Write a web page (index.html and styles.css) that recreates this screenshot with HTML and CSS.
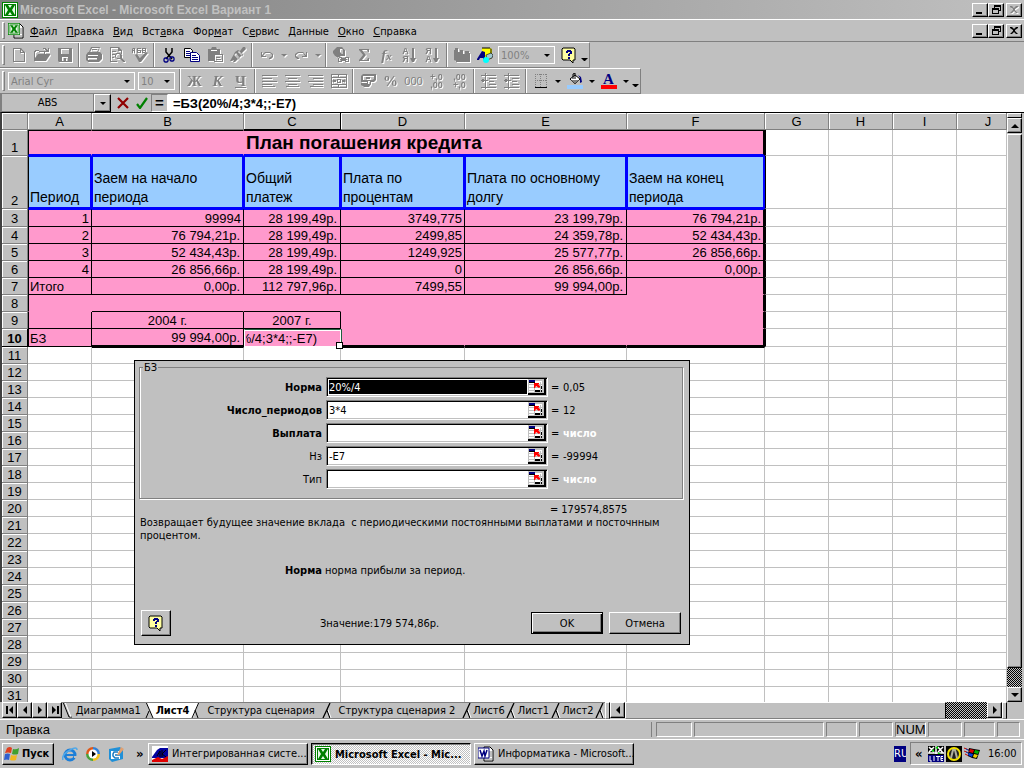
FILE: index.html
```html
<!DOCTYPE html>
<html lang="ru">
<head>
  <meta charset="UTF-8">
  <title>Microsoft Excel - Microsoft Excel Вариант 1</title>
  <link rel="stylesheet" href="styles.css">
</head>
<body>

  <!-- shared icons -->
  <svg class="defs" aria-hidden="true">
    <symbol id="xl" viewBox="0 0 16 16">
      <path d="M0 0h16v16H0z" fill="#008000"/><path d="M1 1h14v14H1z" fill="#fff"/><path d="M2 2h12v12H2z" fill="#008000"/><path d="M3 3h10v10H3z" fill="#e8f8e8"/>
      <path d="M3 3h3l2 3 2-3h3l-3 5 3 5h-3l-2-3-2 3H3l3-5z" fill="#008000"/>
    </symbol>
    <symbol id="help" viewBox="0 0 16 16">
      <path d="M2 1h11l1 1v11h-2v3l-3-3H2l-1-1V2z" fill="#ffffa0" stroke="#000"/>
      <path d="M5 6V4h1V3h4v1h1v3H9v2H7V7h1V6h1V5H7v1zM7 10h2v2H7z" fill="#000080"/>
    </symbol>
    <symbol id="ref" viewBox="0 0 16 14">
      <path d="M0 0h16v14H0z" fill="#c0c0c0"/><path d="M1 2h13v11H1z" fill="#fff"/>
      <path d="M1 5.500h13M1 8.500h13M1 11.500h13M6.500 3v10M12.500 3v10" stroke="#c0c0c0"/>
      <path d="M1 1h6v2H1z" fill="#000080"/><path d="M1 3h6v1H1zM7 11h5v2H7zM13 11h1v2h-1zM13 7h1v3h-1z" fill="#000"/>
      <path d="M6 4h5v1h-1l2 2v1l-1 1-3-2-1 2H6z" fill="#f00"/>
    </symbol>
    <symbol id="min" viewBox="0 0 12 10"><path d="M2 7h6v2H2z"/></symbol>
    <symbol id="restore" viewBox="0 0 12 10"><path d="M4 0h7v6H9V5h1V2H5v1H4zM2 3h7v6H2zm1 2v3h5V5z" fill-rule="evenodd"/></symbol>
    <symbol id="close" viewBox="0 0 12 10"><path d="M2 1h2l2 2 2-2h2v1L7 4v1l3 3H8L6 6 4 8H2l3-3V4L2 2z"/></symbol>
    <symbol id="al" viewBox="0 0 16 16"><path d="M0 2h15v1H0zM0 5h10v1H0zM0 8h15v1H0zM0 11h10v1H0zM0 14h13v-1H0z"/></symbol>
    <symbol id="ac" viewBox="0 0 16 16"><path d="M0 2h15v1H0zM3 5h9v1H3zM0 8h15v1H0zM3 11h9v1H3zM1 14h13v-1H1z"/></symbol>
    <symbol id="ar" viewBox="0 0 16 16"><path d="M0 2h15v1H0zM5 5h10v1H5zM0 8h15v1H0zM5 11h10v1H5zM2 14h13v-1H2z"/></symbol>
    <symbol id="indent" viewBox="0 0 16 16"><path d="M0 2h15v1H0zM8 5h7v1H8zM8 8h5v1H8zM8 11h7v1H8zM0 14h15v1H0zM4 0h1v16H4zM0 7h7v1H0zM1 6h2v3H1z"/></symbol>
    <symbol id="sortdown" viewBox="0 0 16 16"><path d="M11 1h2v10h2l-2 4h-2l-2-4h2z"/></symbol>
  </svg>

  <header class="titlebar">
    <svg class="i16"><use href="#xl"/></svg>
    <h1>Microsoft Excel - Microsoft Excel Вариант 1</h1>
    <div class="winbtns">
      <button aria-label="Свернуть"><svg><use href="#min"/></svg></button>
      <button aria-label="Восстановить"><svg><use href="#restore"/></svg></button>
      <button class="closebtn" aria-label="Закрыть" disabled><svg><use href="#close"/></svg></button>
    </div>
  </header>

  <nav class="menubar">
    <i class="handle"></i>
    <svg class="i16 docicon" viewBox="0 0 16 16"><path d="M6 1h6l3 3v11H6z" fill="#fff" stroke="#000"/><path d="M11 6h3M11 8h3M11 10h3M7 13h7" stroke="#808080"/><use href="#xl" width="12" height="12"/></svg>
    <a href="#"><u>Ф</u>айл</a>
    <a href="#"><u>П</u>равка</a>
    <a href="#"><u>В</u>ид</a>
    <a href="#">Вст<u>а</u>вка</a>
    <a href="#">Фор<u>м</u>ат</a>
    <a href="#">С<u>е</u>рвис</a>
    <a href="#"><u>Д</u>анные</a>
    <a href="#"><u>О</u>кно</a>
    <a href="#"><u>С</u>правка</a>
    <div class="winbtns">
      <button aria-label="Свернуть"><svg><use href="#min"/></svg></button>
      <button aria-label="Восстановить"><svg><use href="#restore"/></svg></button>
      <button class="closebtn" aria-label="Закрыть"><svg><use href="#close"/></svg></button>
    </div>
  </nav>

  <div class="toolbar">
    <i class="handle"></i>
    <button class="tb off" aria-label="Создать"><svg viewBox="0 0 16 16"><path d="M2 1h8l4 4v10H2zm1 1v12h10V6H9V2zm7 1v2h2z" fill-rule="evenodd"/></svg></button>
    <button class="tb off" aria-label="Открыть"><svg viewBox="0 0 16 16"><path d="M0 4h1V3h4v1h6v3h5v1l-4 6H0zm1 1v6l3-4h6V5H5V4H2v1zM9 1h3v1h1v1h1V1h1v4h-4V4h1V3h-1V2H9z" fill-rule="evenodd"/></svg></button>
    <button class="tb off" aria-label="Сохранить"><svg viewBox="0 0 16 16"><path d="M1 1h14v14H2l-1-1zm3 1v5h8V2zm1 8v4h2v-3h2v3h2v-4z" fill-rule="evenodd"/></svg></button>
    <i class="sep"></i>
    <button class="tb off" aria-label="Печать"><svg viewBox="0 0 16 16"><path d="M5 0h9l-2 5h2l2 2v5l-3 3H2l-2-2V8l2-3h1zm1 1L4 5h7l2-4zM2 8v1h10V8zm0 3v2h9v-2zM6 2h5v1H6z" fill-rule="evenodd"/></svg></button>
    <button class="tb off" aria-label="Просмотр"><svg viewBox="0 0 16 16"><path d="M1 0h9l3 3v4h-1V4H9V1H2v13h6v1H1zM3 4h4v1H3zM3 7h3v1H3zM3 10h2v1H3zM7 6h4l2 2v3l3 3v1h-2l-3-3H8l-2-2V8zm1 1L7 8v2l1 1h3V8l-1-1z" fill-rule="evenodd"/></svg></button>
    <button class="tb off" aria-label="Орфография"><svg viewBox="0 0 16 16"><path d="M0 6V2l1-1h2v5H2V4H1v2zM1 3h1V2H1zM5 1h4v1H6v1h3v3H5zm1 3v1h2V4zM10 1h4v5h-4zm1 1v1h2V2zm0 2v1h2V4zM3 8l2-1 3 4 6-6 2 1-7 9H7z" fill-rule="evenodd"/></svg></button>
    <i class="sep"></i>
    <button class="tb" aria-label="Вырезать"><svg viewBox="0 0 16 16"><path d="M5 1v4l6 7M11 1v4l-6 7" fill="none" stroke="#000" stroke-width="1.5"/><path d="M4 11h2l1 1v2l-1 1H4l-1-1v-2zM10 10h2l1 1v2l-1 1h-2l-1-1v-2z" fill="none" stroke="#000080" stroke-width="1.3"/></svg></button>
    <button class="tb" aria-label="Копировать"><svg viewBox="0 0 16 16"><path d="M.5 1.500h6l2 2v7h-8z" fill="#fff" stroke="#000"/><path d="M6.500 5.500h6l3 3v6h-9z" fill="#fff" stroke="#000080"/><path d="M2 4.500h4M2 6.500h4M2 8.500h4M8 8.500h4M8 10.500h6M8 12.500h6" stroke="#000080"/></svg></button>
    <button class="tb off" aria-label="Вставить"><svg viewBox="0 0 16 16"><path d="M1 2h3l1-2h4l1 2h3v5h3v8H7v-1H1zM8 8v6h7V8zM4 3v1h6V3zM9 10h4v1H9zM9 12h5v1H9z" fill-rule="evenodd"/></svg></button>
    <button class="tb off" aria-label="Формат по образцу"><svg viewBox="0 0 16 16"><path d="M13 0h2l1 2-4 4 1 2-3 2-5 5H3l1-2-2 1H0l4-7 1-2 3-2 2 1zM6 6L4 8l4 4 1-2zM8 5l4 4V7L9 4z" fill-rule="evenodd"/></svg></button>
    <i class="sep"></i>
    <button class="tb off" aria-label="Отменить"><svg viewBox="0 0 16 16"><path d="M2 5h1v3l3-3h5l3 2v3l-2 2h-2v-1l3-2V8l-2-2H6L4 9h3v1H2z"/></svg></button>
    <button class="arr off" aria-label="Список отмены"></button>
    <button class="tb off" aria-label="Вернуть"><svg viewBox="0 0 16 16"><path d="M14 5h-1v3l-3-3H5L2 7v3l2 2h2v-1L3 9V8l2-2h5l2 3H9v1h5z"/></svg></button>
    <button class="arr off" aria-label="Список возврата"></button>
    <i class="sep"></i>
    <button class="tb off" aria-label="Гиперссылка"><svg viewBox="0 0 16 16"><path d="M4 0h5l3 3v6H8L5 11 2 9 0 6V4zm3 2v3l2 2h1V3L9 2zM5 10h4v1h3v-1h4v5h-4v-1H9v1H5zm1 1v3h2v-1H7v-1h1v-1zm7 0v1h1v1h-1v1h2v-3z" fill-rule="evenodd"/></svg></button>
    <button class="tb off" aria-label="Автосумма"><svg viewBox="0 0 16 16"><path d="M3 2h10v3h-1l-1-2H6l4 5-4 5h5l1-2h1v3H3v-1l4-5-4-5z"/></svg></button>
    <button class="tb off fx" aria-label="Функция"><i>f<small>x</small></i></button>
    <button class="tb off sort" aria-label="По возрастанию"><span>А<br>Я</span><svg viewBox="8 0 8 16"><use href="#sortdown" width="16" height="16"/></svg></button>
    <button class="tb off sort" aria-label="По убыванию"><span>Я<br>А</span><svg viewBox="8 0 8 16"><use href="#sortdown" width="16" height="16"/></svg></button>
    <i class="sep"></i>
    <button class="tb off" aria-label="Диаграмма"><svg viewBox="0 0 16 16"><path d="M0 3h1V1h3v4h2V3h3v4h2V4h4v10H2l-2-1z"/><path d="M2 15h14v-9h-1v8H2z"/></svg></button>
    <button class="tb" aria-label="Рисование"><svg viewBox="0 0 16 16"><path d="M5 1h8l2 2v8H8L5 7z" fill="#ff0"/><path d="M13 1l2 1v9l-2 1z" fill="#808000"/><path d="M5 1h8" stroke="#000"/><path d="M0 12L5 4l3 1v8H6v-2H3l-1 2H0z" fill="#000080"/><path d="M9 8l5-2 2 2-1 3-5 2z" fill="#a0c8d0" stroke="#000" stroke-width=".6"/><circle cx="9" cy="13" r="3" fill="#0ff"/></svg></button>
    <span class="combo zoombox"><select aria-label="Масштаб"><option>100%</option></select></span>
    <button class="tb" aria-label="Справка"><svg><use href="#help"/></svg></button>
    <button class="arr more" aria-label="Другие кнопки"></button>
  </div>

  <div class="toolbar">
    <i class="handle"></i>
    <span class="combo fontbox"><select aria-label="Шрифт"><option>Arial Cyr</option></select></span>
    <span class="combo sizebox"><select aria-label="Размер"><option>10</option></select></span>
    <i class="sep"></i>
    <button class="tb off letter"><b>Ж</b></button>
    <button class="tb off letter"><b><i>К</i></b></button>
    <button class="tb off letter"><b><u>Ч</u></b></button>
    <i class="sep"></i>
    <button class="tb off" aria-label="По левому краю"><svg><use href="#al"/></svg></button>
    <button class="tb off" aria-label="По центру"><svg><use href="#ac"/></svg></button>
    <button class="tb off" aria-label="По правому краю"><svg><use href="#ar"/></svg></button>
    <button class="tb off" aria-label="Объединить"><svg viewBox="0 0 16 16"><path d="M0 1h16v14H0zm1 1v2h6V2zm7 0v2h7V2zM1 5v6h14V5zm0 7v2h6v-2zm7 0v2h7v-2zM1 8l2-2v1h2v2H3v1zM15 8l-2-2v1h-2v2h2v1zM6 6h4v4H6zm1 1v2h2V7z" fill-rule="evenodd"/></svg></button>
    <i class="sep"></i>
    <button class="tb off" aria-label="Денежный"><svg viewBox="0 0 16 16"><path d="M1 3l2-2h13v6l-2 2h-3v2l-2 3H4l-3-2v-2h6V9H1zm2 0v4h9l2-1V3zM6 4h4v2H6zM10 8v3H8V8z" fill-rule="evenodd"/></svg></button>
    <button class="tb off letter"><b>%</b></button>
    <button class="tb off zeros">000</button>
    <button class="tb off dec"><span>+,0<br>,00</span></button>
    <button class="tb off dec"><span>,00<br>+,0</span></button>
    <i class="sep"></i>
    <button class="tb off" aria-label="Уменьшить отступ"><svg><use href="#indent"/></svg></button>
    <button class="tb off" aria-label="Увеличить отступ"><svg><use href="#indent"/></svg></button>
    <i class="sep"></i>
    <button class="tb" aria-label="Границы"><svg viewBox="0 0 16 16"><path d="M2 1.500h12M2 7.500h12M2.500 1v13M7.500 1v13M13.500 1v13" stroke="#808080" stroke-dasharray="1 1"/><path d="M2 14h12v1H2z"/></svg></button>
    <button class="arr" aria-label="Виды границ"></button>
    <button class="tb" aria-label="Заливка"><svg viewBox="0 0 16 16"><path d="M3 6l5-4 5 4-5 5z" fill="#fff" stroke="#000"/><path d="M6 6V1l2-1v6" fill="none" stroke="#000"/><path d="M4 7h8l-4 4z" fill="#808080"/><path d="M11 2l3 2 1 5-2 1V5z" fill="#000080"/><path d="M0 12h16v4H0z" fill="#9cf"/></svg></button>
    <button class="arr" aria-label="Цвет заливки"></button>
    <button class="tb fontcolor" aria-label="Цвет шрифта"><b>А</b></button>
    <button class="arr" aria-label="Цвета шрифта"></button>
    <button class="arr more" aria-label="Другие кнопки"></button>
  </div>

  <div class="formulabar">
    <input class="namebox" aria-label="Имя" value="ABS">
    <button class="drop" aria-label="Функции"></button>
    <button class="fb" aria-label="Отмена"><svg viewBox="0 0 12 12"><path d="M1 1l10 10M11 1L1 11" stroke="#900000" stroke-width="2.200"/></svg></button>
    <button class="fb" aria-label="Ввод"><svg viewBox="0 0 12 12"><path d="M1 7l3 4 7-10" fill="none" stroke="#008000" stroke-width="2.200"/></svg></button>
    <button class="fb eq">=</button>
    <input class="formula" aria-label="Строка формул" value="=БЗ(20%/4;3*4;;-E7)">
  </div>

  <main class="workspace">
    <div class="sheet">
      <table class="grid">
        <colgroup>
          <col class="c0"><col class="cA"><col class="cB"><col class="cC"><col class="cD"><col class="cE"><col class="cF"><col class="cG"><col class="cG"><col class="cG"><col>
        </colgroup>
        <thead>
          <tr><th></th><th>A</th><th>B</th><th class="cur">C</th><th>D</th><th>E</th><th>F</th><th>G</th><th>H</th><th>I</th><th class="last">J</th></tr>
        </thead>
        <tbody id="rows">
          <tr class="r1"><th>1</th><td class="p title lft"></td><td class="p title"></td><td class="p title edge" colspan="4">План погашения кредита</td><td class="after"></td><td></td><td></td><td></td></tr>
          <tr class="r2"><th>2</th><td class="h lft">Период</td><td class="h">Заем на начало периода</td><td class="h">Общий платеж</td><td class="h">Плата по процентам</td><td class="h">Плата по основному долгу</td><td class="h edge">Заем на конец периода</td><td class="after"></td><td></td><td></td><td></td></tr>
          <tr class="r3"><th>3</th><td class="p b lft">1</td><td class="p b">99994</td><td class="p b m">28 199,49р.</td><td class="p b">3749,775</td><td class="p b m">23 199,79р.</td><td class="p b edge">76 794,21р.</td><td class="after"></td><td></td><td></td><td></td></tr>
          <tr><th>4</th><td class="p b lft">2</td><td class="p b m">76 794,21р.</td><td class="p b m">28 199,49р.</td><td class="p b">2499,85</td><td class="p b m">24 359,78р.</td><td class="p b edge">52 434,43р.</td><td class="after"></td><td></td><td></td><td></td></tr>
          <tr><th>5</th><td class="p b lft">3</td><td class="p b m">52 434,43р.</td><td class="p b m">28 199,49р.</td><td class="p b">1249,925</td><td class="p b m">25 577,77р.</td><td class="p b edge">26 856,66р.</td><td class="after"></td><td></td><td></td><td></td></tr>
          <tr><th>6</th><td class="p b lft">4</td><td class="p b m">26 856,66р.</td><td class="p b m">28 199,49р.</td><td class="p b">0</td><td class="p b m">26 856,66р.</td><td class="p b edge">0,00р.</td><td class="after"></td><td></td><td></td><td></td></tr>
          <tr><th>7</th><td class="p b lft txt">Итого</td><td class="p b m">0,00р.</td><td class="p b m">112 797,96р.</td><td class="p b">7499,55</td><td class="p b m">99 994,00р.</td><td class="p edge"></td><td class="after"></td><td></td><td></td><td></td></tr>
          <tr><th>8</th><td class="p lft"></td><td class="p under"></td><td class="p under"></td><td class="p"></td><td class="p"></td><td class="p edge"></td><td class="after"></td><td></td><td></td><td></td></tr>
          <tr><th>9</th><td class="p b lft"></td><td class="p b mid">2004 г.</td><td class="p b mid">2007 г.</td><td class="p"></td><td class="p"></td><td class="p edge"></td><td class="after"></td><td></td><td></td><td></td></tr>
          <tr class="r10"><th class="cur">10</th><td class="p b lft txt">БЗ</td><td class="p b m foot">99 994,00р.</td><td class="p edit"><span>%/4;3*4;;-E7)</span></td><td class="p foot"></td><td class="p foot"></td><td class="p edge foot"></td><td class="after"></td><td></td><td></td><td></td></tr>
          <tr class="r11"><th>11</th><td></td><td class="top"></td><td></td><td class="top"></td><td class="top"></td><td class="top"></td><td></td><td></td><td></td><td></td></tr>
        </tbody>
      </table>

      <form class="dialog" onsubmit="return false">
        <fieldset>
          <legend>БЗ</legend>
          <label class="req" for="a1">Норма</label>
          <span class="ref"><input id="a1" class="sel" value="20%/4"><button aria-label="Свернуть"><svg><use href="#ref"/></svg></button></span>
          <span>=</span><output>0,05</output>
          <label class="req" for="a2">Число_периодов</label>
          <span class="ref"><input id="a2" value="3*4"><button aria-label="Свернуть"><svg><use href="#ref"/></svg></button></span>
          <span>=</span><output>12</output>
          <label class="req" for="a3">Выплата</label>
          <span class="ref"><input id="a3"><button aria-label="Свернуть"><svg><use href="#ref"/></svg></button></span>
          <span>=</span><output class="none">число</output>
          <label for="a4">Нз</label>
          <span class="ref"><input id="a4" value="-E7"><button aria-label="Свернуть"><svg><use href="#ref"/></svg></button></span>
          <span>=</span><output>-99994</output>
          <label for="a5">Тип</label>
          <span class="ref"><input id="a5"><button aria-label="Свернуть"><svg><use href="#ref"/></svg></button></span>
          <span>=</span><output class="none">число</output>
        </fieldset>
        <p class="result"><span>=</span> <output>179574,8575</output></p>
        <p class="about">Возвращает будущее значение вклада&nbsp; с периодическими постоянными выплатами и посточнным процентом.</p>
        <p class="arg"><b>Норма</b> норма прибыли за период.</p>
        <div class="actions">
          <button class="btn helpbtn" aria-label="Справка"><svg class="i16"><use href="#help"/></svg></button>
          <span class="value">Значение:179 574,86р.</span>
          <button class="btn default">OK</button>
          <button class="btn">Отмена</button>
        </div>
      </form>
    </div>

    <div class="vscroll">
      <i class="split"></i>
      <button aria-label="Вверх"><svg viewBox="0 0 8 8"><path d="M4 2l4 4H0z"/></svg></button>
      <i class="thumb"></i>
      <i class="dither"></i>
      <button aria-label="Вниз"><svg viewBox="0 0 8 8"><path d="M0 2h8L4 6z"/></svg></button>
    </div>
  </main>

  <div class="tabstrip">
    <button class="nav" aria-label="Первый лист"><svg viewBox="0 0 8 8"><path d="M0 0h2v8H0zM7 0v8L3 4z"/></svg></button>
    <button class="nav" aria-label="Предыдущий лист"><svg viewBox="0 0 8 8"><path d="M6 0v8L2 4z"/></svg></button>
    <button class="nav" aria-label="Следующий лист"><svg viewBox="0 0 8 8"><path d="M2 0v8l4-4z"/></svg></button>
    <button class="nav" aria-label="Последний лист"><svg viewBox="0 0 8 8"><path d="M6 0h2v8H6zM1 0v8l4-4z"/></svg></button>
    <div class="tabs">
      <svg class="slant" viewBox="0 0 10 17"><path d="M1 0l6 15h3" fill="none" stroke="#000"/><path d="M3 0l6 15" fill="none" stroke="#fff"/></svg>
      <a class="t1" href="#">Диаграмма1</a>
      <svg class="slant" viewBox="0 0 10 17"><path d="M1 0h9v16H8z" fill="#fff"/><path d="M1 0l7 16M4 9l-3 7" fill="none" stroke="#000"/></svg>
      <a class="t2 active" href="#">Лист4</a>
      <svg class="slant" viewBox="0 0 10 17"><path d="M0 0h9L3 16H0z" fill="#fff"/><path d="M9 0L2 16M5 8l3 8" fill="none" stroke="#000"/></svg>
      <a class="t3" href="#">Структура сценария</a>
      <svg class="slant" viewBox="0 0 10 17"><g id="edge"><path d="M8 1L1 16M5 8l3 8" fill="none" stroke="#000" stroke-width="1.300"/><path d="M6 8l3 8" fill="none" stroke="#fff"/></g></svg>
      <a class="t4" href="#">Структура сценария 2</a>
      <svg class="slant" viewBox="0 0 10 17"><use href="#edge"/></svg>
      <a class="t5" href="#">Лист6</a>
      <svg class="slant" viewBox="0 0 10 17"><use href="#edge"/></svg>
      <a class="t5" href="#">Лист1</a>
      <svg class="slant" viewBox="0 0 10 17"><use href="#edge"/></svg>
      <a class="t5" href="#">Лист2</a>
      <svg class="slant" viewBox="0 0 10 17"><use href="#edge"/></svg>
    </div>
    <i class="hsplit"></i>
    <button class="nav" aria-label="Влево"><svg viewBox="0 0 8 8"><path d="M6 0v8L2 4z"/></svg></button>
    <i class="hthumb"></i>
    <i class="dither"></i>
    <button class="nav" aria-label="Вправо"><svg viewBox="0 0 8 8"><path d="M2 0v8l4-4z"/></svg></button>
    <i class="hsplit"></i>
    <i class="corner"></i>
  </div>

  <footer class="status">
    <span class="mode">Правка</span>
    <span class="pane w1"></span><span class="pane w2"></span><span class="pane w3"></span><span class="pane w4"></span><span class="pane w3">NUM</span><span class="pane w4"></span><span class="pane w3"></span><span class="pane w5"></span>
  </footer>

  <div class="taskbar">
    <button class="start"><svg class="i16" viewBox="0 0 16 16"><path d="M3 2q3-2 5 0L7 7Q4 6 1 7z" fill="#e04020"/><path d="M9 3q3 1 6-1l-1 6q-3 1-6 0z" fill="#40a030"/><path d="M1 8q3-1 5 0l-1 6q-2-1-5 0z" fill="#3060d0"/><path d="M7 9q3 1 6 0l-1 5q-3 1-6 0z" fill="#f0b820"/></svg>Пуск</button>
    <div class="quick">
      <a href="#" aria-label="Internet Explorer"><svg class="i16" viewBox="0 0 16 16"><circle cx="8" cy="9" r="5" fill="none" stroke="#1e7fd8" stroke-width="3"/><path d="M4 8h9v2H4z" fill="#1e7fd8"/><path d="M12 10h4v2h-4z" fill="#c0c0c0"/><path d="M1 14Q-1 9 8 4q7-4 7 0" fill="none" stroke="#50a8e8" stroke-width="1.500"/></svg></a>
      <a href="#" aria-label="Проигрыватель"><svg class="i16" viewBox="0 0 16 16"><path d="M8 1a7 7 0 0 0-7 7h7z" fill="#e05818"/><path d="M8 1a7 7 0 0 1 7 7H8z" fill="#3080d8"/><path d="M15 8a7 7 0 0 1-7 7V8z" fill="#f0c020"/><path d="M8 15a7 7 0 0 1-7-7h7z" fill="#48a038"/><circle cx="8" cy="8" r="4.500" fill="#fff"/><path d="M7 5l4 3-4 3z" fill="#000"/></svg></a>
      <a href="#" aria-label="Рабочий стол"><svg class="i16" viewBox="0 0 16 16"><path d="M1 3l11-2 3 3v9L4 16l-3-3z" fill="#2090d8"/><path d="M3 5h9v8H3z" fill="#fff"/><path d="M10 6H6L5 8v2l2 2h4M7 9h5" fill="none" stroke="#1878c0" stroke-width="1.500"/><path d="M13 1l3 2-5 6H9z" fill="#e0a070"/></svg></a>
      <span class="chev">»</span>
    </div>
    <div class="tasks">
      <button class="task"><svg class="i16" viewBox="0 0 16 16"><path d="M0 0h16v16H0z" fill="#fff"/><path d="M0 11L5 4l3-2h8v10H0z" fill="#0000a0"/><path d="M0 16v-2l6-3 4 2 6-3v6z" fill="#e00000"/><path d="M5 10l3-5v6M10 4v7M14 4l-4 4 4 3" fill="none" stroke="#000"/></svg><span>Интегрированная систе...</span></button>
      <button class="task on"><svg class="i16"><use href="#xl"/></svg><span>Microsoft Excel - Mic...</span></button>
      <button class="task"><svg class="i16" viewBox="0 0 16 16"><path d="M6 1h6l3 3v11H6z" fill="#fff" stroke="#000"/><path d="M11 6h3M11 8h3M11 10h3M7 13h7" stroke="#808080"/><path d="M0 2h11v10H0z" fill="#fff" stroke="#000080"/><path d="M2 4l2 6 2-5 1 5 2-6" fill="none" stroke="#000080" stroke-width="1.500"/></svg><span>Информатика - Microsoft...</span></button>
    </div>
    <span class="lang">RU</span>
    <div class="tray">
      <span class="chev">«</span>
      <svg class="i16" viewBox="0 0 16 16"><path d="M0 0h16v9H0z" fill="#000"/><path d="M1 1l5 5M6 1L1 6M10 1l5 6M15 1l-5 5M8 0v8M0 7h16" stroke="#fff" stroke-width="1.500"/><path d="M7 2l3-2v3zM3 5l3-2v3zM10 6l3 2h-3z" fill="#00d000"/><path d="M0 9h16v7H0z" fill="#000080"/><path d="M2 10v5h2M6 10v5M8 10.500h4M10 10v5M15 10.500h-2v4h2M13 12.500h2" fill="none" stroke="#fff"/></svg>
      <svg class="i16" viewBox="0 0 16 16"><path d="M0 0h16v16H0z" fill="#000"/><circle cx="8" cy="8" r="6" fill="#202020" stroke="#f0e000" stroke-width="2"/><path d="M5 12l2-8h2l2 8" fill="none" stroke="#b0b0a0" stroke-width="2"/></svg>
      <svg class="i16" viewBox="0 0 16 16"><path d="M0 2l5 2M0 5l5 2M1 8l4 2" stroke="#c00000"/><path d="M2 3l4 2M2 6l4 2" stroke="#0040c0"/><path d="M5 2l5 1 6 1-3 9-5-1-4-2z" fill="#000"/><path d="M6 3l4 1-1 3-4-1z" fill="#e00000"/><path d="M11 4l4 1-1 3-4-1z" fill="#00b000"/><path d="M5 7l4 1-1 3-4-2z" fill="#0040e0"/><path d="M10 8l4 1-2 3-3-1z" fill="#f0d000"/></svg>
      <time>16:00</time>
    </div>
  </div>

  <script>
    // empty rows under the data
    const rows = document.getElementById('rows');
    for (let i = 12; i <= 31; i++) {
      const tr = document.createElement('tr');
      tr.innerHTML = '<th>' + i + '</th>' + '<td></td>'.repeat(10);
      rows.appendChild(tr);
    }
  </script>
</body>
</html>
```
FILE: styles.css
```css
* {
  box-sizing: border-box;
}

body {
  margin: 0;
  height: 100vh;
  display: flex;
  flex-direction: column;
  overflow: hidden;
  background: #c0c0c0;
  color: #000;
  font: 11px "DejaVu Sans Condensed", "Liberation Sans", sans-serif;
}

button,
input,
select {
  font: inherit;
  color: inherit;
  margin: 0;
  padding: 0;
  border: 0;
  border-radius: 0;
  background: none;
}

a {
  color: inherit;
  text-decoration: none;
}

p {
  margin: 0;
}

svg {
  display: block;
  flex: none;
}

.defs {
  position: absolute;
  width: 0;
  height: 0;
}

.i16 {
  width: 16px;
  height: 16px;
}

/* title */
.titlebar {
  display: flex;
  align-items: center;
  height: 19px;
  flex: none;
  padding: 0 2px;
  background: linear-gradient(to right, #808080, #c0c0c0);
}

.titlebar h1 {
  flex: 1;
  margin: 0 0 0 2px;
  font-family: "Liberation Sans", sans-serif;
  font-size: 12px;
  color: #c0c0c0;
}

.winbtns {
  display: flex;
  margin-left: auto;
}

.winbtns button {
  width: 16px;
  height: 14px;
  padding: 1px;
  background: #c0c0c0;
  border: 1px solid;
  border-color: #fff #000 #000 #fff;
  box-shadow: inset -1px -1px #808080;
}

.winbtns svg {
  width: 12px;
  height: 10px;
}

.winbtns .closebtn {
  margin-left: 2px;
}

.winbtns button:disabled svg {
  fill: #808080;
  filter: drop-shadow(1px 1px 0 #fff);
}

/* menu */
.menubar {
  display: flex;
  align-items: center;
  height: 23px;
  flex: none;
  padding: 0 2px;
  border-top: 1px solid #fff;
  border-bottom: 1px solid #808080;
}

.handle {
  width: 3px;
  align-self: stretch;
  flex: none;
  margin: 2px 3px 2px 0;
  border: 1px solid;
  border-color: #fff #808080 #808080 #fff;
}

.docicon {
  margin-right: 1px;
}

.menubar a {
  padding: 1px 4px 0 5px;
}

/* toolbars */
.toolbar {
  display: flex;
  align-items: center;
  align-self: flex-start;
  height: 26px;
  flex: none;
  padding-left: 2px;
  border: 1px solid;
  border-color: #fff #808080 #808080 #c0c0c0;
  border-left: 0;
}

.toolbar .handle {
  margin-right: 2px;
}

.sep {
  width: 2px;
  align-self: stretch;
  margin: 0 2px;
  border-left: 1px solid #808080;
  border-right: 1px solid #fff;
}

.tb {
  display: flex;
  align-items: center;
  justify-content: center;
  width: 23px;
  height: 22px;
  line-height: 1;
}

.tb svg {
  width: 16px;
  height: 16px;
}

.off {
  color: #808080;
  fill: #808080;
}

.off > * {
  filter: drop-shadow(1px 1px 0 #fff);
}

.arr {
  width: 11px;
  height: 22px;
  padding: 0 3px;
}

.arr::before,
.combo::after,
.drop::before {
  content: "";
  display: block;
  border: 3px solid transparent;
  border-top-color: #000;
  border-bottom: 0;
}

.arr.off::before {
  border-top-color: #808080;
  filter: drop-shadow(1px 1px 0 #fff);
}

.arr.more {
  width: 9px;
  padding: 8px 1px 0;
}

.combo {
  position: relative;
  height: 18px;
  border: 1px solid #fff;
  color: #808080;
}

.combo select {
  appearance: none;
  display: block;
  width: 100%;
  height: 16px;
  padding-left: 2px;
}

.combo::after {
  position: absolute;
  right: 4px;
  top: 7px;
}

.zoombox {
  width: 57px;
  margin: 0 2px;
}

.fontbox {
  width: 127px;
  margin: 0 3px 0 1px;
}

.sizebox {
  width: 37px;
  margin-right: 2px;
}

.letter,
.fx {
  font-family: "Liberation Serif", serif;
  font-size: 15px;
}

.fx {
  font-weight: bold;
}

.fx small {
  font-size: 11px;
}

.sort svg {
  width: 8px;
}

.sort {
  font: bold 9px/8px "Liberation Sans", sans-serif;
}

.zeros {
  font: 11px "Liberation Sans", sans-serif;
  text-shadow: 1px 1px #fff;
}

.dec {
  font: bold 9px/8px "Liberation Sans", sans-serif;
  text-align: right;
}

.fontcolor b {
  width: 16px;
  height: 16px;
  border-bottom: 4px solid #f00;
  font: bold 15px/12px "Liberation Serif", serif;
  color: #000080;
}

/* formula bar */
.formulabar {
  display: flex;
  align-items: stretch;
  height: 18px;
  flex: none;
  border-left: 2px solid #808080;
}

.namebox {
  width: 92px;
  border-bottom: 1px solid #808080;
  border-right: 1px solid #808080;
  text-align: center;
}

.drop {
  display: flex;
  align-items: center;
  justify-content: center;
  width: 17px;
  margin-right: 2px;
  border: 1px solid;
  border-color: #fff #000 #000 #fff;
  box-shadow: inset -1px -1px #808080;
}

.fb {
  display: flex;
  align-items: center;
  justify-content: center;
  width: 19px;
}

.fb svg {
  width: 12px;
  height: 12px;
}

.fb.eq {
  width: 17px;
  border: 1px solid;
  border-color: #808080 #fff #fff #808080;
  font: bold 15px/14px "Liberation Sans", sans-serif;
}

.formula {
  flex: 1;
  padding-left: 5px;
  background: #fff;
  font: bold 13px "Liberation Sans", sans-serif;
}

/* sheet */
.workspace {
  display: flex;
  flex: 1;
  min-height: 0;
}

.sheet {
  position: relative;
  flex: 1;
  min-width: 0;
  overflow: hidden;
  background: #fff;
  border-left: 2px solid #404040;
  border-top: 1px solid #000;
}

.grid {
  width: 100%;
  table-layout: fixed;
  border-collapse: separate;
  border-spacing: 0;
  font: 13px/15px "Liberation Sans", sans-serif;
}

.c0 { width: 26px; }
.cA, .cG { width: 64px; }
.cB { width: 152px; }
.cC { width: 97px; }
.cD { width: 124px; }
.cE { width: 162px; }
.cF { width: 138px; }

.grid th {
  height: 17px;
  padding: 0;
  background: #c0c0c0;
  border-right: 1px solid #808080;
  border-bottom: 1px solid #808080;
  box-shadow: inset 1px 1px #fff;
  font-weight: normal;
  vertical-align: bottom;
}

.grid thead th.cur {
  border-right-color: #000;
  border-bottom-color: #000;
}

.grid thead th.last {
  padding-left: 13px;
}

.grid tbody th.cur {
  font-weight: bold;
  border-color: #000;
}

.grid td {
  height: 17px;
  padding: 0 2px;
  border-right: 1px solid #c0c0c0;
  border-bottom: 1px solid #c0c0c0;
  text-align: right;
  vertical-align: bottom;
  white-space: nowrap;
}

.grid .p {
  background: #ff99cc;
  border-color: #ff99cc;
}

.grid .b {
  border-color: #000;
}

.grid .lft {
  border-left: 1px solid #000;
}

.grid .m {
  padding-right: 3px;
}

.grid .under {
  border-bottom-color: #000;
}

.grid .txt {
  text-align: left;
  padding-left: 1px;
}

.grid .mid {
  text-align: center;
}

.grid .edge {
  border-right: 2px solid #000;
}

.grid .after {
  border-left: 1px solid #000;
}

.grid .foot {
  border-bottom: 2px solid #000;
}

.grid .top {
  border-top: 1px solid #000;
}

.grid .r1 th, .grid .r1 td { height: 26px; }
.grid .r2 th, .grid .r2 td { height: 53px; }
.grid .r3 th, .grid .r3 td { height: 18px; }
.grid .r10 th, .grid .r10 td { height: 18px; }

.grid .title {
  border-top: 1px solid #000;
  border-bottom: 2px solid #00f;
  font-weight: bold;
  font-size: 19px;
  line-height: 22px;
  text-align: left;
}

.grid .r2 .h {
  background: #99ccff;
  border: 2px solid #00f;
  border-top-width: 1px;
  border-left-width: 1px;
  padding: 0 1px;
  font-size: 14px;
  line-height: 19px;
  text-align: left;
  white-space: normal;
}

.grid .r2 .lft {
  border-left-color: #000;
}

.grid .r3 .p {
  border-top: 1px solid #00f;
}

.grid .edit {
  position: relative;
  padding: 0 0 0 1px;
  border: 1px solid #fff;
  border-top-color: #206040;
  box-shadow: inset 0 1px #fff, 1px 0 #206040;
}

.grid .edit::after {
  content: "";
  position: absolute;
  right: -3px;
  bottom: -3px;
  width: 5px;
  height: 5px;
  background: #fff;
  border: 1px solid #000;
}

.edit span {
  display: flex;
  justify-content: flex-end;
  width: 71px;
  overflow: hidden;
}

/* function dialog */
.dialog {
  position: absolute;
  left: 132px;
  top: 247px;
  width: 556px;
  padding: 0 4px 8px;
  background: #c0c0c0;
  border: 1px solid #000;
}

.dialog fieldset {
  display: grid;
  grid-template-columns: 186px 222px 12px 1fr;
  grid-auto-rows: 20px;
  row-gap: 3px;
  column-gap: 0;
  align-items: center;
  margin: 0 2px 0 0;
  padding: 3px 0 9px;
  border: 1px solid #808080;
  box-shadow: inset 1px 0 #fff, 1px 1px #fff;
}

.dialog legend {
  margin-left: 3px;
  padding: 0 1px;
  line-height: 13px;
}

.dialog label {
  padding-right: 4px;
  text-align: right;
}

.req {
  font-weight: bold;
}

.ref {
  display: flex;
  height: 20px;
  padding: 1px;
  background: #fff;
  border: 1px solid;
  border-color: #808080 #fff #fff #808080;
  box-shadow: inset 1px 1px #000, inset -1px -1px #c0c0c0;
}

.ref + span {
  padding-left: 3px;
}

.ref input {
  flex: 1;
  min-width: 0;
  margin: 1px;
}

.ref .sel {
  background: #000;
  color: #fff;
}

.ref button {
  width: 18px;
  border-right: 2px solid #000;
  border-bottom: 2px solid #000;
}

.ref svg {
  width: 16px;
  height: 14px;
}

.dialog output {
  padding-left: 3px;
}

.dialog .none {
  color: #fff;
  font-weight: bold;
}

.result {
  display: flex;
  margin: 4px 0 0 411px;
  line-height: 13px;
}

.about {
  margin: 0 10px 0 1px;
  line-height: 13px;
}

.arg {
  margin: 22px 0 0 146px;
  line-height: 13px;
}

.actions {
  display: flex;
  align-items: center;
  margin: 33px 4px 0 2px;
}

.value {
  flex: 1;
  padding-left: 149px;
}

.btn {
  width: 72px;
  height: 22px;
  margin-left: 6px;
  background: #c0c0c0;
  border: 1px solid;
  border-color: #fff #000 #000 #fff;
  box-shadow: inset -1px -1px #808080;
}

.btn.default {
  border-color: #000;
  box-shadow: inset 1px 1px #fff, inset -1px -1px #000, inset -2px -2px #808080;
}

.helpbtn {
  display: flex;
  align-items: center;
  justify-content: center;
  width: 30px;
  height: 26px;
  margin: 0;
}

/* scroll bars */
.vscroll {
  display: flex;
  flex-direction: column;
  width: 17px;
  flex: none;
  padding-right: 2px;
  border-top: 1px solid #000;
}

.vscroll button,
.tabstrip .nav {
  display: flex;
  align-items: center;
  justify-content: center;
  height: 15px;
  flex: none;
  background: #c0c0c0;
  border: 1px solid;
  border-color: #fff #000 #000 #fff;
  box-shadow: inset -1px -1px #808080;
}

.vscroll svg,
.nav svg {
  width: 8px;
  height: 8px;
}

.split {
  height: 5px;
  border: 1px solid;
  border-color: #fff #000 #000 #fff;
}

.thumb {
  flex: 1;
  margin-top: 1px;
  border: 1px solid;
  border-color: #fff #000 #000 #fff;
  box-shadow: inset -1px -1px #808080;
}

.dither {
  background: repeating-conic-gradient(#000 0 25%, #c0c0c0 0 50%) 0 0 / 2px 2px;
}

.vscroll .dither {
  height: 19px;
}

/* sheet tabs */
.tabstrip {
  display: flex;
  height: 17px;
  flex: none;
  padding-left: 2px;
}

.tabstrip .nav {
  width: 15px;
  height: 16px;
}

.tabs {
  display: flex;
  flex: none;
  width: 543px;
  height: 17px;
  overflow: hidden;
  border-top: 1px solid #808080;
  border-bottom: 1px solid #808080;
}

.slant {
  width: 10px;
  height: 17px;
  margin-top: -1px;
}

.tabs a {
  text-align: center;
  line-height: 15px;
  white-space: nowrap;
}

.tabs .active {
  height: 16px;
  margin-top: -1px;
  padding-top: 1px;
  background: #fff;
  font-weight: bold;
}

.t1 { width: 74px; }
.t2 { width: 36px; }
.t3 { width: 124px; }
.t4 { width: 132px; }
.t5 { width: 35px; }

.hsplit {
  width: 5px;
  border: 1px solid;
  border-color: #fff #000 #808080 #fff;
}

.hthumb {
  flex: 1;
  border: 1px solid;
  border-color: #fff #000 #808080 #fff;
}

.tabstrip .dither {
  width: 41px;
}

.corner {
  width: 17px;
}

/* status bar */
.status {
  display: flex;
  align-items: center;
  gap: 2px;
  height: 20px;
  flex: none;
  padding: 0 4px 0 6px;
  border-top: 1px solid #fff;
  font: 13px/15px "Liberation Sans", sans-serif;
}

.mode {
  flex: 1;
  margin-right: 2px;
  border-right: 1px solid #808080;
}

.pane {
  height: 15px;
  border: 1px solid;
  border-color: #808080 #fff #fff #808080;
  line-height: 13px;
  text-align: center;
}

.w1 { width: 36px; }
.w2 { width: 130px; }
.w3 { width: 31px; }
.w4 { width: 34px; }
.w5 { width: 23px; }

/* taskbar */
.taskbar {
  display: flex;
  align-items: center;
  height: 29px;
  flex: none;
  padding: 0 2px 1px;
  border-top: 1px solid #fff;
}

.start,
.task {
  display: flex;
  align-items: center;
  height: 22px;
  border: 1px solid;
  border-color: #fff #000 #000 #fff;
  box-shadow: inset -1px -1px #808080;
}

.start {
  gap: 2px;
  width: 52px;
  padding-left: 1px;
  font-weight: bold;
}

.quick {
  display: flex;
  align-items: center;
  gap: 7px;
  width: 94px;
  padding-left: 8px;
}

.chev {
  font-weight: bold;
  font-size: 13px;
  line-height: 15px;
}

.quick .chev {
  margin-left: 5px;
  align-self: flex-start;
}

.tasks {
  display: flex;
  flex: 1;
  gap: 3px;
}

.task {
  gap: 4px;
  width: 160px;
  padding-left: 3px;
  white-space: nowrap;
}

.task.on {
  padding-top: 1px;
  border-color: #000 #fff #fff #000;
  box-shadow: inset 1px 1px #808080;
  background: repeating-conic-gradient(#fff 0 25%, #c0c0c0 0 50%) 0 0 / 2px 2px;
  font-weight: bold;
}

.lang {
  width: 12px;
  height: 16px;
  margin-right: 4px;
  overflow: hidden;
  background: #000080;
  color: #fff;
  line-height: 16px;
}

.tray {
  display: flex;
  align-items: center;
  gap: 2px;
  width: 112px;
  height: 23px;
  padding-left: 4px;
  border: 1px solid;
  border-color: #808080 #fff #fff #808080;
}

.tray .chev {
  width: 11px;
}

.tray time {
  margin-left: 6px;
}
```
